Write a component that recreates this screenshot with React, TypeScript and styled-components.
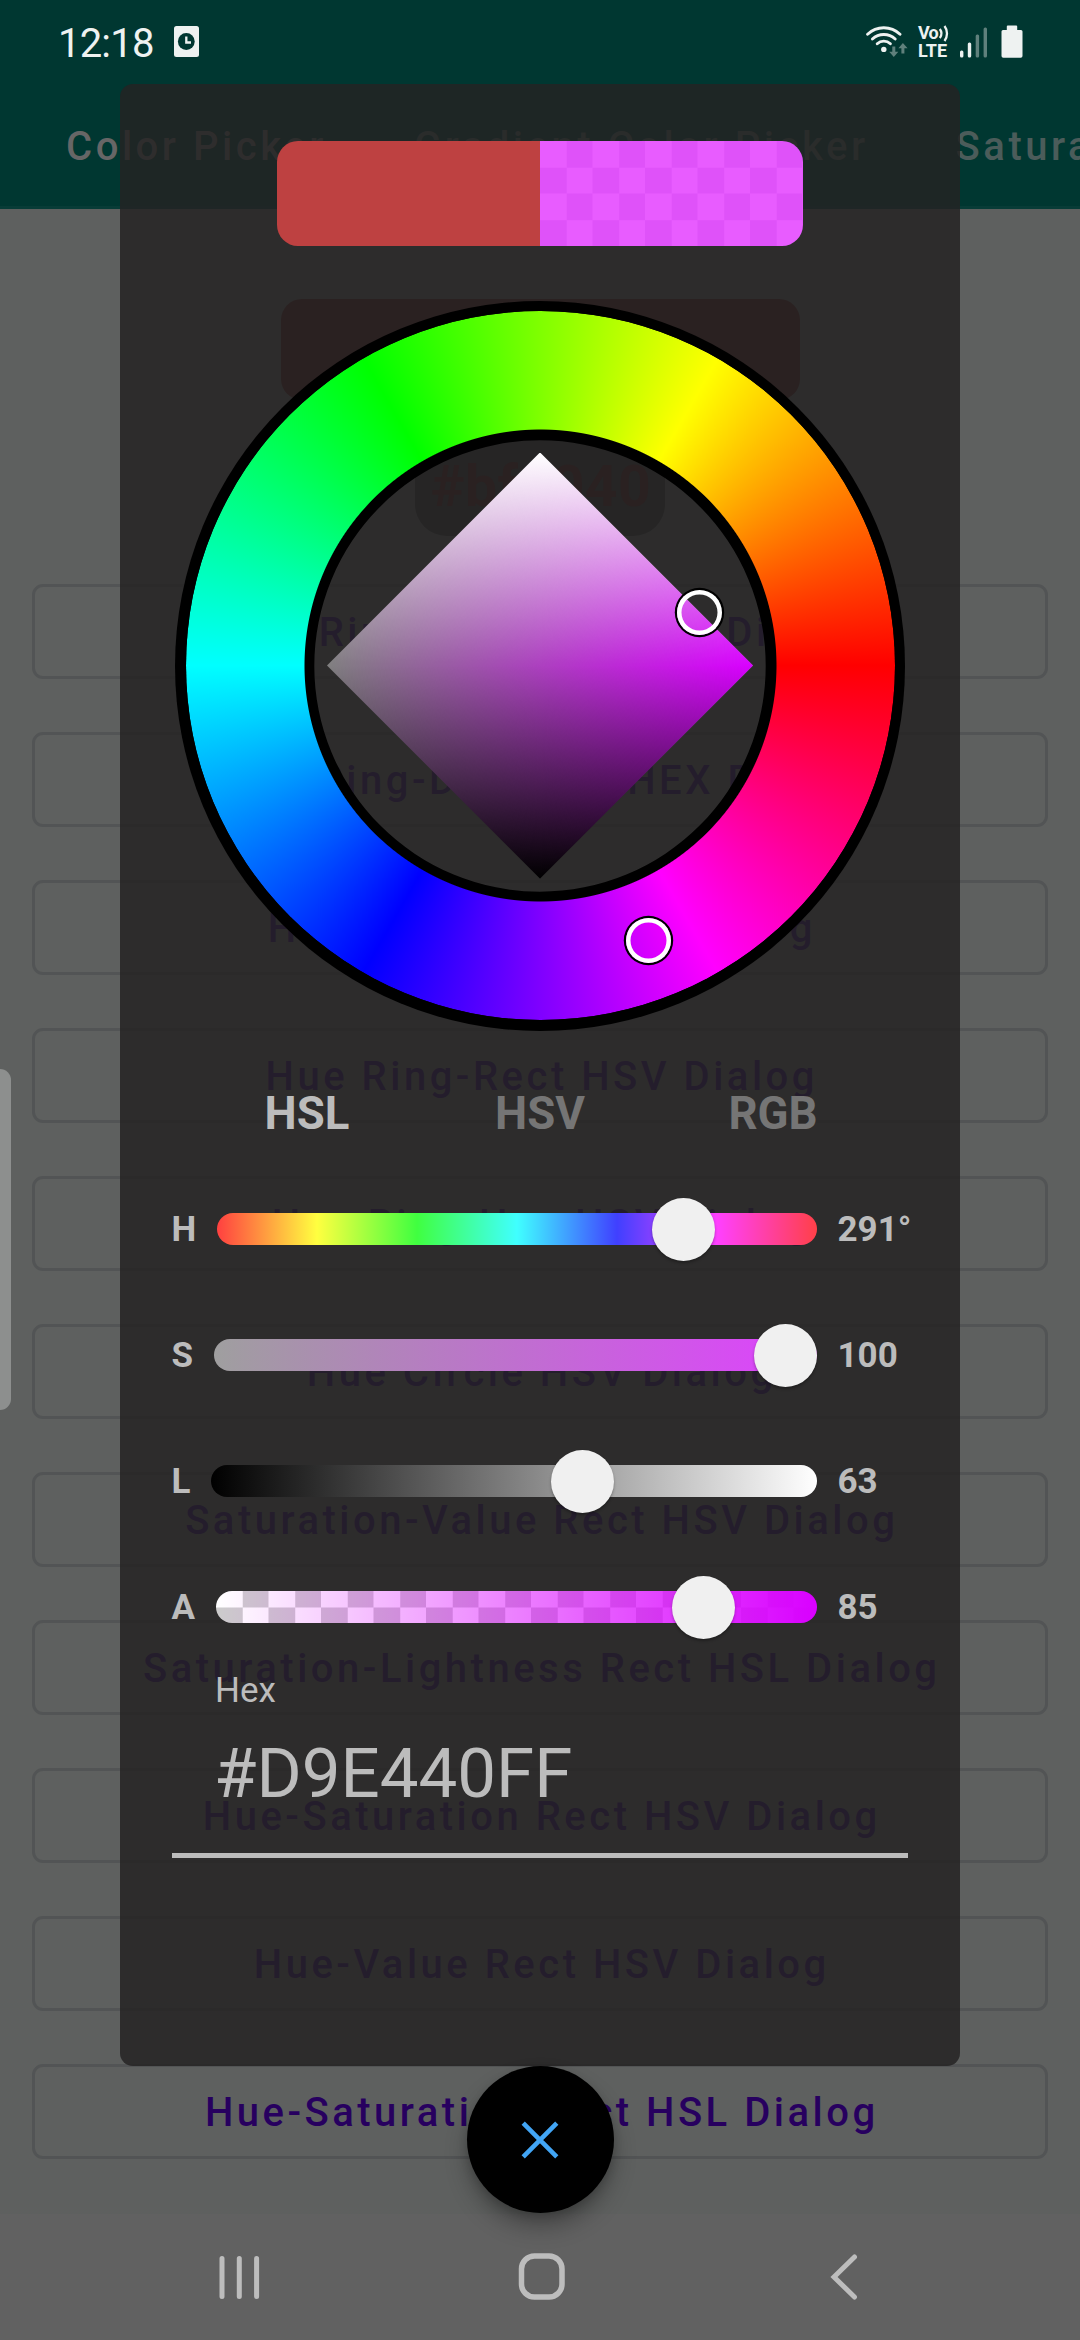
import React from "react";
import styled, { createGlobalStyle } from "styled-components";

const GlobalStyle = createGlobalStyle`
  * { box-sizing: border-box; }
  body { margin: 0; background: #5e605f; font-family: Roboto, "Noto Sans", sans-serif; }
`;

const Screen = styled.div`
  position: relative;
  width: 1080px;
  height: 2340px;
  overflow: hidden;
  display: flex;
  flex-direction: column;
  background: #5e605f;
`;

/* ---------- page behind the dialog ---------- */

const Header = styled.header`
  height: 209px;
  background: #003731;
  border-bottom: 3px solid #083c37;
  flex: none;
`;

const StatusBar = styled.div`
  height: 84px;
  padding: 0 57px 0 58px;
  display: flex;
  justify-content: space-between;
`;

const StatusGroup = styled.div`
  display: flex;
  align-items: flex-start;
`;

const Clock = styled.span`
  font-size: 40px;
  line-height: 46px;
  letter-spacing: -0.8px;
  color: #eef2f1;
  margin-top: 21px;
  width: 116px;
`;

const StatusIcon = styled.svg<{ $top: number; $gap?: number }>`
  margin-top: ${(p) => p.$top}px;
  margin-left: ${(p) => p.$gap ?? 0}px;
  flex: none;
`;

const VoLte = styled.div`
  margin: 24px 0 0 10px;
  width: 32px;
  display: flex;
  flex-direction: column;
  font-size: 18px;
  line-height: 18px;
  font-weight: 700;
  color: #eef2f1;
`;

const VoLine = styled.span`
  display: flex;
  white-space: nowrap;
  letter-spacing: -0.8px;

  svg {
    flex: none;
    margin-top: 1px;
  }
`;

const TabStrip = styled.nav`
  height: 125px;
  display: flex;
  align-items: center;
  padding-left: 66px;
  gap: 87px;
  white-space: nowrap;
`;

const PageTab = styled.span<{ $active?: boolean }>`
  font-size: 40px;
  line-height: 48px;
  font-weight: 500;
  letter-spacing: 3.54px;
  color: ${(p) => (p.$active ? "#666666" : "#4b5c5a")};
`;

const Page = styled.main`
  flex: 1;
  display: flex;
  flex-direction: column;
  align-items: center;
  padding: 90px 32px 0;
`;

const ColorBlock = styled.div`
  width: 519px;
  height: 101px;
  border-radius: 21px;
  background: #4c1a1a;
  flex: none;
`;

const HexChip = styled.div`
  margin-top: 36px;
  width: 250px;
  height: 100px;
  border-radius: 32px;
  background: #323333;
  color: #4c1a1a;
  font-size: 57px;
  font-weight: 700;
  letter-spacing: 0.5px;
  padding-left: 2px;
  display: flex;
  align-items: center;
  justify-content: center;
  flex: none;
`;

const ButtonList = styled.div`
  margin-top: 48px;
  width: 100%;
  display: flex;
  flex-direction: column;
  gap: 53px;
`;

const OutlineButton = styled.button`
  height: 95px;
  border: 3px solid #525455;
  border-radius: 11px;
  background: transparent;
  padding: 2px 0 0 3.5px;
  font-family: inherit;
  font-size: 40px;
  line-height: 48px;
  font-weight: 500;
  letter-spacing: 3.5px;
  color: #27005f;
`;

const EdgeHandle = styled.div`
  position: absolute;
  left: 0;
  top: 1069px;
  width: 11px;
  height: 341px;
  border-radius: 0 11px 11px 0;
  background: #8d8f8e;
`;

const NavBar = styled.footer`
  position: absolute;
  left: 0;
  right: 0;
  bottom: 0;
  height: 126px;
  background: #616161;
  display: flex;
  align-items: center;
`;

const NavIcon = styled.svg<{ $gap: number }>`
  margin-left: ${(p) => p.$gap}px;
  flex: none;
`;

/* ---------- dialog ---------- */

const Overlay = styled.div`
  position: absolute;
  inset: 0;
  padding-top: 84px;
  display: flex;
  flex-direction: column;
  align-items: center;
`;

const Dialog = styled.section`
  width: 840px;
  height: 1982px;
  border-radius: 13px;
  background: rgba(36, 35, 35, 0.84);
  padding-top: 57px;
  display: flex;
  flex-direction: column;
  align-items: center;
  flex: none;
`;

const Preview = styled.div`
  width: 526px;
  height: 105px;
  border-radius: 21px;
  overflow: hidden;
  display: flex;
  flex: none;
`;

const OldColor = styled.div`
  flex: 1;
  background: #be4141;
`;

const NewColor = styled.div`
  flex: 1;
  background: conic-gradient(#df52f9 25%, #e85cff 0 50%, #df52f9 0 75%, #e85cff 0) 0 0 / 52.5px 52.5px;
`;

const Wheel = styled.div`
  position: relative;
  margin-top: 54.5px;
  width: 730px;
  height: 730px;
  display: grid;
  place-items: center;
  flex: none;
  & > * { grid-area: 1 / 1; }
`;

const HueRing = styled.div`
  width: 709px;
  height: 709px;
  border-radius: 50%;
  background: conic-gradient(from 90deg, #f00, #f0f, #00f, #0ff, #0f0, #ff0, #f00);
  mask: radial-gradient(circle, transparent 235.5px, #000 236.5px);
`;

const RingBorder = styled.div<{ $size: number; $width: number }>`
  width: ${(p) => p.$size}px;
  height: ${(p) => p.$size}px;
  border-radius: 50%;
  box-shadow: inset 0 0 0 ${(p) => p.$width}px #000;
`;

const Diamond = styled.div`
  width: 426px;
  height: 426px;
  clip-path: polygon(50% 0, 100% 50%, 50% 100%, 0 50%);
  background: linear-gradient(#fff, #000);
  &::after {
    content: "";
    display: block;
    height: 100%;
    background: linear-gradient(#fff, #d900ff 50%, #000);
    mask: linear-gradient(to right, transparent, #000);
  }
`;

const Selector = styled.div<{ $x: number; $y: number }>`
  position: absolute;
  left: ${(p) => p.$x}px;
  top: ${(p) => p.$y}px;
  width: 45px;
  height: 45px;
  margin: -22.5px 0 0 -22.5px;
  border-radius: 50%;
  box-shadow: 0 0 0 2.2px #000, inset 0 0 0 4.5px #fff;
`;

const ModeTabs = styled.div`
  margin-top: 30.5px;
  width: 699px;
  height: 105px;
  display: grid;
  grid-template-columns: repeat(3, 1fr);
  align-items: center;
  text-align: center;
  flex: none;
`;

const ModeTab = styled.span<{ $active?: boolean }>`
  font-size: 45.5px;
  font-weight: 700;
  color: ${(p) => (p.$active ? "#bcbcbc" : "#757575")};
`;

const SliderRow = styled.div`
  width: 737px;
  height: 126px;
  display: flex;
  align-items: center;
  color: #bcbcbc;
  font-size: 35px;
  font-weight: 700;
  flex: none;
`;

const Track = styled.div<{ $fill: string }>`
  position: relative;
  flex: 1;
  height: 32px;
  margin: 0 21px;
  border-radius: 16px;
  background: ${(p) => p.$fill};
`;

const Thumb = styled.div`
  position: absolute;
  top: 50%;
  width: 63px;
  height: 63px;
  margin: -31.5px 0 0 -31.5px;
  border-radius: 50%;
  background: #f0f0f0;
  box-shadow: 0 2px 3px rgba(0, 0, 0, 0.3);
`;

const SliderValue = styled.span`
  width: 71px;
  white-space: nowrap;
`;

const HexField = styled.label`
  width: 736px;
  padding: 1px 0 39px 43px;
  border-bottom: 5px solid #bcbcbc;
  display: flex;
  flex-direction: column;
  color: #bcbcbc;
  flex: none;
`;

const HexLabel = styled.span`
  font-size: 35px;
  line-height: 40px;
`;

const HexValue = styled.span`
  margin: 22.5px 0 0 -1px;
  font-size: 69px;
  line-height: 80px;
`;

const CloseButton = styled.button`
  width: 147px;
  height: 147px;
  padding: 0;
  border: 0;
  border-radius: 50%;
  background: #000;
  box-shadow: 0 14px 22px rgba(0, 0, 0, 0.28), 0 4px 8px rgba(0, 0, 0, 0.15);
  display: grid;
  place-items: center;
  flex: none;
`;

const DIALOG_BUTTONS = [
  "Hue Ring-Diamond HSL Dialog",
  "Hue Ring-Diamond HEX Dialog",
  "Hue Ring-Rect HSL Dialog",
  "Hue Ring-Rect HSV Dialog",
  "Hue Ring-Hue HSV Dialog",
  "Hue Circle HSV Dialog",
  "Saturation-Value Rect HSV Dialog",
  "Saturation-Lightness Rect HSL Dialog",
  "Hue-Saturation Rect HSV Dialog",
  "Hue-Value Rect HSV Dialog",
  "Hue-Saturation Rect HSL Dialog",
];

const SLIDERS = [
  {
    label: "H",
    value: "291°",
    fromEnd: 133.5,
    fill: "linear-gradient(to right, #ff4040, #ffff40, #40ff40, #40ffff, #4040ff, #ff40ff, #ff4048)",
  },
  { label: "S", value: "100", fromEnd: 31.5, fill: "linear-gradient(to right, #9f9f9f, #df40ff)" },
  { label: "L", value: "63", fromEnd: 234.5, fill: "linear-gradient(to right, #000, #fff)" },
  {
    label: "A",
    value: "85",
    fromEnd: 112.7,
    fill:
      "linear-gradient(to right, rgba(217,0,255,0), #d900ff), " +
      "conic-gradient(#ccc 25%, #fff 0 50%, #ccc 0 75%, #fff 0) 0 -10.25px / 52.5px 52.5px",
  },
];

function StatusIcons() {
  return (
    <StatusGroup>
      <StatusIcon $top={24} width="42" height="34" viewBox="0 0 42 34" fill="none">
        <g stroke="#eef2f1" strokeWidth="2.9" strokeLinecap="round">
          <path d="M1.6 10.2a23.5 23.5 0 0 1 32.4 0" />
          <path d="M6.4 15a16.5 16.5 0 0 1 22.8 0" />
          <path d="M11.2 19.8a9.6 9.6 0 0 1 13.2 0" />
        </g>
        <circle cx="17.8" cy="25.4" r="2.7" fill="#eef2f1" />
        <g fill="#5f807c">
          <path d="M26.3 22.5h3v5.2h3l-4.5 5.3-4.6-5.3h3.1z" />
          <path d="M35.4 29.5h3v-5.2h3.2l-4.7-5.4-4.5 5.4h3z" />
        </g>
      </StatusIcon>
      <VoLte>
        <VoLine>
          Vo
          <svg width="12" height="17" viewBox="0 0 12 17" fill="none" stroke="#eef2f1" strokeWidth="2.3">
            <path d="M1.8 4a7.5 7.5 0 0 1 0 9M6.5 1a12.5 12.5 0 0 1 0 15" />
          </svg>
        </VoLine>
        <span>LTE</span>
      </VoLte>
      <StatusIcon $top={27} $gap={10} width="28" height="31" viewBox="0 0 28 31">
        <rect x="0" y="23.5" width="3.4" height="7" rx="1.5" fill="#eef2f1" />
        <rect x="7.8" y="15.5" width="3.4" height="15" rx="1.5" fill="#eef2f1" />
        <rect x="15.7" y="7.5" width="3.4" height="23" rx="1.5" fill="#5f807c" />
        <rect x="23.6" y="0.5" width="3.4" height="30" rx="1.5" fill="#5f807c" />
      </StatusIcon>
      <StatusIcon $top={25} $gap={13} width="22" height="33" viewBox="0 0 22 33" fill="#eef2f1">
        <path d="M6.8 0.5h8.4q1 0 1 1V5H20q1.5 0 1.5 1.5V31q0 1.8-1.8 1.8H2.3Q.5 32.8.5 31V6.5Q.5 5 2 5h3.8V1.5q0-1 1-1z" />
      </StatusIcon>
    </StatusGroup>
  );
}

export default function App() {
  return (
    <>
      <GlobalStyle />
      <Screen>
        <Header>
          <StatusBar>
            <StatusGroup>
              <Clock>12:18</Clock>
              <StatusIcon $top={26} width="25" height="31" viewBox="0 0 25 31">
                <rect width="25" height="31" rx="2.5" fill="#eef2f1" />
                <circle cx="12.3" cy="15.5" r="8.4" fill="#003731" />
                <path d="M12.3 10.5v6h4.7" fill="none" stroke="#eef2f1" strokeWidth="2.3" />
              </StatusIcon>
            </StatusGroup>
            <StatusIcons />
          </StatusBar>
          <TabStrip>
            <PageTab $active>Color Picker</PageTab>
            <PageTab>Gradient Color Picker</PageTab>
            <PageTab>Saturation</PageTab>
          </TabStrip>
        </Header>
        <Page>
          <ColorBlock />
          <HexChip>#bf4040</HexChip>
          <ButtonList>
            {DIALOG_BUTTONS.map((name) => (
              <OutlineButton key={name}>{name}</OutlineButton>
            ))}
          </ButtonList>
        </Page>
        <EdgeHandle />
        <NavBar>
          <NavIcon $gap={217} width="45" height="48" viewBox="0 0 45 48" stroke="#bdbdbd" strokeWidth="5" strokeLinecap="round">
            <path d="M5 5.5v38M22.3 5.5v38M39.6 5.5v38" />
          </NavIcon>
          <NavIcon $gap={255} width="48" height="48" viewBox="0 0 48 48" fill="none" stroke="#bdbdbd" strokeWidth="5.5">
            <rect x="4.5" y="3" width="40.5" height="41" rx="13" />
          </NavIcon>
          <NavIcon $gap={264} width="30" height="48" viewBox="0 0 30 48" fill="none" stroke="#bdbdbd" strokeWidth="5">
            <path d="M25.5 4L5 24l20.5 20" strokeLinecap="round" />
          </NavIcon>
        </NavBar>

        <Overlay>
          <Dialog>
            <Preview>
              <OldColor />
              <NewColor />
            </Preview>
            <Wheel>
              <RingBorder $size={730} $width={12} />
              <RingBorder $size={474} $width={11.3} />
              <HueRing />
              <Diamond />
              <Selector $x={524.3} $y={312.2} />
              <Selector $x={473.7} $y={640.2} />
            </Wheel>
            <ModeTabs>
              <ModeTab $active>HSL</ModeTab>
              <ModeTab>HSV</ModeTab>
              <ModeTab>RGB</ModeTab>
            </ModeTabs>
            {SLIDERS.map((s) => (
              <SliderRow key={s.label}>
                <span>{s.label}</span>
                <Track $fill={s.fill}>
                  <Thumb style={{ left: `calc(100% - ${s.fromEnd}px)` }} />
                </Track>
                <SliderValue>{s.value}</SliderValue>
              </SliderRow>
            ))}
            <HexField>
              <HexLabel>Hex</HexLabel>
              <HexValue>#D9E440FF</HexValue>
            </HexField>
          </Dialog>
          <CloseButton aria-label="Close">
            <svg width="40" height="40" viewBox="0 0 40 40" stroke="#42a5f5" strokeWidth="4.6">
              <path d="M3.2 3.2l33.6 33.6M36.8 3.2L3.2 36.8" />
            </svg>
          </CloseButton>
        </Overlay>
      </Screen>
    </>
  );
}
